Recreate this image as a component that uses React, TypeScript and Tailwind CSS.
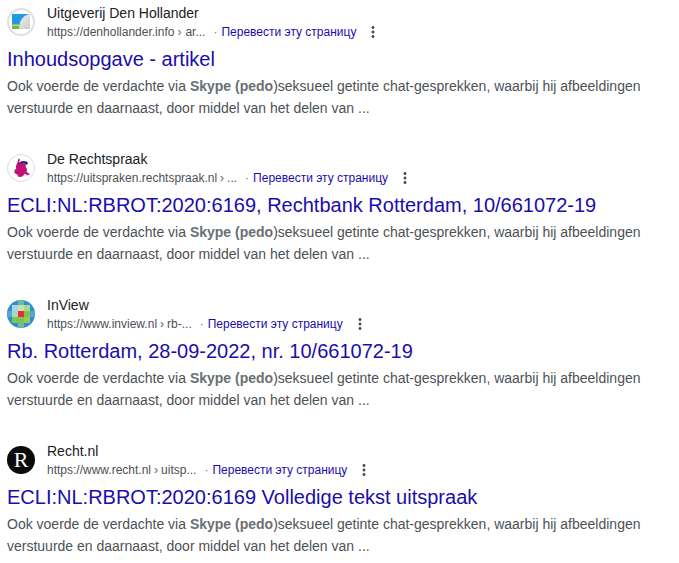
import React from 'react';

const snippetEnd = 'seksueel getinte chat-gesprekken, waarbij hij afbeeldingen verstuurde en daarnaast, door middel van het delen van ...';

const DenHollanderLogo = () => (
  <svg viewBox="0 0 28 28" className="h-[28px] w-[28px]">
    <defs>
      <linearGradient id="dh-paper" x1="0" y1="0" x2="1" y2="1">
        <stop offset="0" stopColor="#f6f7f6" />
        <stop offset="1" stopColor="#c9cdcb" />
      </linearGradient>
    </defs>
    <circle cx="14" cy="14" r="13" fill="#fff" stroke="#dfe1e0" strokeWidth="2" />
    <rect x="5" y="6" width="18" height="15" fill="url(#dh-paper)" />
    <path d="M5 6h17c-5 1.500-8.500 5-9.500 11H5z" fill="#1e9be8" />
    <path d="M5 16.500h7.500c-.3 1.500-.4 3-.4 4.500H5z" fill="#d8d64a" />
    <path d="M5 18h7.200c-.1 1-.1 2-.1 3H5z" fill="#7ab648" />
  </svg>
);

const RechtspraakLogo = () => (
  <svg viewBox="0 0 28 28" className="h-[28px] w-[28px]">
    <circle cx="14" cy="14" r="13.500" fill="#fff" stroke="#dcdcdc" />
    <path d="M11.500 4.500c1 0 1.500.8 1.200 1.800L12 9c2-.5 4-.2 6 .8 1 .7 1 2 .5 3 1.500 1.500 2 3.500 1 5l3.500 2.700-2.500.7-2.800-1.500c-1 2-2.700 3.300-4.700 3.300-1.500 0-2.500-1-2.300-2.300-1.500-.3-3-1.200-3.400-2.700-.2-1.500.7-2.800 2-3.200-.8-2-.2-4 .9-5.300z" fill="#c40f78" />
    <path d="M11 10.500c1-2.500 3.500-3.700 6-3.500 1.700.1 3.200.7 4 1.800l-1 2.200c-1.800-1.500-3.500-2-5.500-1.800-1.300.1-2.500.6-3.500 1.300z" fill="#35206f" />
  </svg>
);

const inviewCells = [
  ['#a9d5e8', '#c3e3b0', '#a8d88c'],
  ['#a6d8c8', '#ee2b3c', '#7fc450'],
  ['#7fc450', '#7fc450', '#8fcb5e'],
];

const InViewLogo = () => (
  <svg viewBox="0 0 28 28" className="h-[28px] w-[28px]">
    <defs>
      <clipPath id="inview-clip">
        <circle cx="14" cy="14" r="14" />
      </clipPath>
    </defs>
    <g clipPath="url(#inview-clip)">
      <rect width="28" height="28" fill="#2e8fd4" />
      <rect x="11" y="0" width="6" height="28" fill="#6fb9a0" />
      <rect x="0" y="11" width="28" height="6" fill="#5aa6c8" />
      {inviewCells.map((row, y) =>
        row.map((color, x) => (
          <rect key={`${x}-${y}`} x={5 + x * 6} y={5 + y * 6} width="6" height="6" fill={color} />
        ))
      )}
    </g>
  </svg>
);

const RechtLogo = () => (
  <div className="flex h-[28px] w-[28px] items-center justify-center rounded-full bg-[#0a0a0a] font-['Liberation_Serif',serif] text-[22px] leading-none text-white">
    R
  </div>
);

const results = [
  {
    site: 'Uitgeverij Den Hollander',
    url: 'https://denhollander.info',
    crumb: 'ar...',
    crumbClass: 'ml-[4px]',
    title: 'Inhoudsopgave - artikel',
    logo: <DenHollanderLogo />,
  },
  {
    site: 'De Rechtspraak',
    url: 'https://uitspraken.rechtspraak.nl',
    crumb: '...',
    crumbClass: 'ml-[3px]',
    title: 'ECLI:NL:RBROT:2020:6169, Rechtbank Rotterdam, 10/661072-19',
    logo: <RechtspraakLogo />,
  },
  {
    site: 'InView',
    url: 'https://www.inview.nl',
    crumb: 'rb-...',
    crumbClass: 'ml-[3px]',
    title: 'Rb. Rotterdam, 28-09-2022, nr. 10/661072-19',
    logo: <InViewLogo />,
  },
  {
    site: 'Recht.nl',
    url: 'https://www.recht.nl',
    crumb: 'uitsp...',
    crumbClass: 'ml-[3px]',
    title: 'ECLI:NL:RBROT:2020:6169 Volledige tekst uitspraak',
    logo: <RechtLogo />,
  },
];

const App: React.FC = () => {
  return (
    <div className="h-[563px] w-[679px] overflow-hidden bg-white pl-[7px] pr-[14px] font-['Liberation_Sans',Arial,sans-serif]">
      {results.map((result) => (
        <div key={result.site} className="h-[146px]">
          <div className="flex h-[44px] pt-[4px]">
            <div className="mt-[4px] w-[40px] flex-shrink-0">{result.logo}</div>
            <div>
              <div className="h-[19px] text-[14px] leading-[18px] text-[#202124]">{result.site}</div>
              <div className="flex h-[18px] items-center text-[12px] leading-[18px] text-[#4d5156]">
                <span>{result.url}</span>
                <span className="ml-[3px] text-[#5f6368]">›</span>
                <span className={result.crumbClass}>{result.crumb}</span>
                <span className="ml-[8px] mr-[4px] text-[#70757a]">·</span>
                <span className="text-[#1a0dab]">Перевести эту страницу</span>
                <svg viewBox="0 0 24 24" className="ml-[8px] h-[18px] w-[18px] fill-[#4d5156]">
                  <path d="M12 8c1.100 0 2-.9 2-2s-.9-2-2-2-2 .9-2 2 .9 2 2 2zm0 2c-1.100 0-2 .9-2 2s.9 2 2 2 2-.9 2-2-.9-2-2-2zm0 6c-1.100 0-2 .9-2 2s.9 2 2 2 2-.9 2-2-.9-2-2-2z" />
                </svg>
              </div>
            </div>
          </div>
          <h3 className="h-[31px] text-[20px] font-normal leading-[30px] text-[#1a0dab]">{result.title}</h3>
          <p className="text-[14px] leading-[22px] text-[#4d5156]">
            Ook voerde de verdachte via <b className="font-bold text-[#6a6f74]">Skype (pedo</b>){snippetEnd}
          </p>
        </div>
      ))}
    </div>
  );
};

export default App;
